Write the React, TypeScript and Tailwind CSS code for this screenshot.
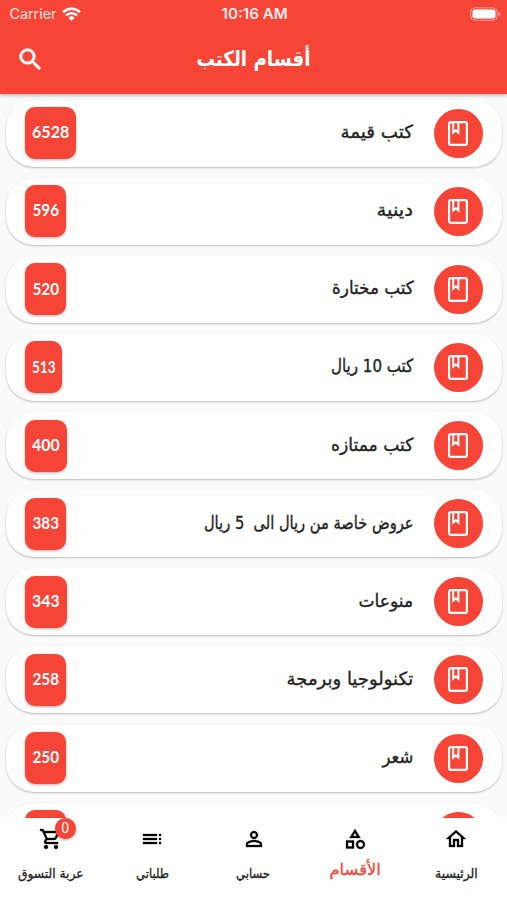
import { useLayoutEffect, useRef } from "react";
import {
  MdSearch,
  MdOutlineShoppingCart,
  MdOutlineToc,
  MdPersonOutline,
  MdOutlineCategory,
  MdOutlineHome,
} from "react-icons/md";

type FitProps = { text: string; width: number; className?: string };

// Condenses or widens one line of text so that it fills the given width.
function Fit({ text, width, className = "" }: FitProps) {
  const ref = useRef<HTMLSpanElement>(null);
  useLayoutEffect(() => {
    const el = ref.current;
    if (el) el.style.transform = `scaleX(${width / el.offsetWidth})`;
  }, [text, width]);
  return (
    <span className="flex justify-center" style={{ width }}>
      <span ref={ref} className={`shrink-0 whitespace-pre ${className}`}>
        {text}
      </span>
    </span>
  );
}

const rows = [
  { name: "كتب قيمة", w: 73, count: "6528", cw: 37, bw: 51 },
  { name: "دينية", w: 37, count: "596", cw: 27, bw: 41 },
  { name: "كتب مختارة", w: 82, count: "520", cw: 27, bw: 41 },
  { name: "كتب 10 ريال", w: 82, count: "513", cw: 24, bw: 37 },
  { name: "كتب ممتازه", w: 82, count: "400", cw: 28, bw: 42 },
  { name: "عروض خاصة من ريال الى  5 ريال", w: 210, count: "383", cw: 27, bw: 41 },
  { name: "منوعات", w: 55, count: "343", cw: 28, bw: 42 },
  { name: "تكنولوجيا وبرمجة", w: 127, count: "258", cw: 27, bw: 41 },
  { name: "شعر", w: 31, count: "250", cw: 27, bw: 41 },
  { name: "", w: 0, count: "", cw: 0, bw: 41 },
];

function BookIcon() {
  return (
    <svg width="20" height="25" viewBox="0 0 20 25" fill="none" stroke="white">
      <rect x="1.1" y="1.1" width="17.8" height="22.8" rx="1.8" strokeWidth="2.2" />
      <path d="M5.2 1v10.6l2.6-2.2 2.6 2.2V1" strokeWidth="2" />
    </svg>
  );
}

const tabs = [
  { label: "الرئيسية", w: 43, Icon: MdOutlineHome },
  { label: "الأقسام", w: 51, Icon: MdOutlineCategory, active: true },
  { label: "حسابي", w: 34, Icon: MdPersonOutline },
  { label: "طلباتي", w: 33, Icon: MdOutlineToc },
  { label: "عربة التسوق", w: 66, Icon: MdOutlineShoppingCart, badge: "0" },
];

export default function App() {
  return (
    <div
      dir="rtl"
      className="flex h-[900px] w-[507px] flex-col overflow-hidden bg-[#fafafa] font-['DejaVu_Sans',sans-serif]"
    >
      <header className="relative z-10 flex h-[94px] shrink-0 flex-col bg-[#f64436] text-white shadow-[0_1px_4px_rgba(0,0,0,0.35)]">
        <div
          dir="ltr"
          className="grid h-7 grid-cols-3 items-center pr-[6px] pl-[9px] font-[Inter,sans-serif] text-[13px]"
        >
          <div className="-mt-px flex items-center gap-[6px] text-white/85">
            <Fit text="Carrier" width={47} className="text-[14px]" />
            <svg width="19" height="14" viewBox="0 0 19 14" fill="none" stroke="white" strokeWidth="2.6">
              <path d="M1 5.2a12.2 12.2 0 0 1 17 0M4 8.4a8 8 0 0 1 11 0" />
              <path d="M6.4 10.8a4.5 4.5 0 0 1 6.2 0L9.5 14z" fill="white" stroke="none" />
            </svg>
          </div>
          <div className="-mt-px flex justify-center text-white/90">
            <Fit text="10:16 AM" width={66} className="text-[14px] font-semibold" />
          </div>
          <div className="-mt-px flex justify-end">
            <svg width="31" height="14" viewBox="0 0 31 14">
              <rect x="0.8" y="0.8" width="26.4" height="12.4" rx="3.8" fill="none" stroke="white" strokeOpacity="0.5" />
              <rect x="2.5" y="2.5" width="23" height="9" rx="2.2" fill="white" />
              <path d="M28.5 4.8q2 .5 2 2.2t-2 2.2z" fill="white" fillOpacity="0.5" />
            </svg>
          </div>
        </div>
        <div className="grid h-[62px] grid-cols-[60px_1fr_60px] items-center">
          <span />
          <div className="flex justify-center pt-px">
            <Fit text="أقسام الكتب" width={114} className="text-[21px] font-bold" />
          </div>
          <div className="flex justify-center">
            <MdSearch className="size-[29px] stroke-white [stroke-width:0.5] [&>path[fill=none]]:stroke-none" />
          </div>
        </div>
      </header>

      <main className="flex min-h-0 flex-1 flex-col gap-[11.15px] overflow-hidden pt-[5.5px] pr-[5px] pl-[6px]">
        {rows.map((r) => (
          <div
            key={r.count}
            className="flex h-[67px] w-[496px] shrink-0 items-center rounded-[28px] bg-white pr-[19.5px] pl-[19px] shadow-[0_1px_2px_rgba(0,0,0,0.26)]"
          >
            <div className="flex size-[49px] items-center justify-center rounded-full bg-[#f64436]">
              <BookIcon />
            </div>
            {r.name && (
              <div className="mr-5 pb-[3px] text-[#222] [-webkit-text-stroke:0.35px_#222]">
                <Fit text={r.name} width={r.w} className="text-[18px]" />
              </div>
            )}
            <div
              className="mr-auto flex h-[52px] items-center justify-center rounded-[10px] bg-[#f64436] pb-[2px] text-white shadow-[0_1px_3px_rgba(0,0,0,0.3)]"
              style={{ width: r.bw }}
            >
              {r.count && (
                <Fit text={r.count} width={r.cw} className="font-[Lato,sans-serif] text-[17px] font-bold" />
              )}
            </div>
          </div>
        ))}
      </main>

      <nav className="relative grid h-[82px] shrink-0 grid-cols-5 bg-white">
        {tabs.map(({ label, w, Icon, active, badge }) => (
          <div key={label} className="flex flex-col items-center pt-[9px] text-black">
            <div className="relative">
              <Icon className="size-6 stroke-black [stroke-width:0.3] [&>path[fill=none]]:stroke-none" />
              {badge && (
                <span className="absolute -top-[9px] -right-[13px] flex size-[21px] items-center justify-center rounded-full bg-[#f64436] pb-px font-[Roboto,sans-serif] text-[14px] text-white shadow-[0_1px_3px_rgba(0,0,0,0.35)]">
                  {badge}
                </span>
              )}
            </div>
            <div
              className={
                active
                  ? "mt-[9px] text-[#f64436] [-webkit-text-stroke:0.3px_#f64436]"
                  : "mt-[13px] text-[#222] [-webkit-text-stroke:0.3px_#222]"
              }
            >
              <Fit text={label} width={w} className={active ? "text-[16px] leading-5" : "text-[13px] leading-5"} />
            </div>
          </div>
        ))}
      </nav>
    </div>
  );
}
